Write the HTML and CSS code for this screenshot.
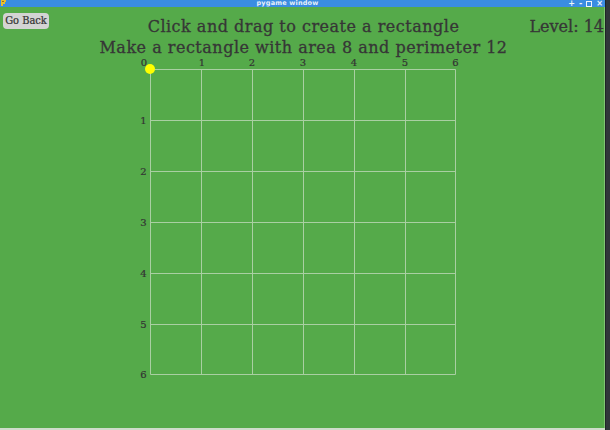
FILE: index.html
```html
<!DOCTYPE html>
<html>
<head>
<meta charset="utf-8">
<title>pygame window</title>
<link rel="stylesheet" href="styles.css">
</head>
<body>
<div class="screen">
  <div class="window">
    <div class="titlebar">
      <svg class="app-icon" width="8" height="7" viewBox="0 0 8 7">
        <path d="M1 0 H6 V2 H5 V4 H3 V6 H1 Z" fill="#e8c030"/>
        <rect x="2" y="1" width="2" height="1" fill="#a07010"/>
      </svg>
      <span class="title">pygame window</span>
      <span class="controls"><span>+</span><span>-</span><span class="restore"></span><span>×</span></span>
    </div>
    <div class="main">
      <div class="header">
        <button class="back">Go Back</button>
        <div class="prompt">
          <div>Click and drag to create a rectangle</div>
          <div>Make a rectangle with area 8 and perimeter 12</div>
        </div>
        <div class="level">Level: 14</div>
      </div>
      <svg class="board" width="330" height="330" viewBox="0 0 330 330">
        <g class="lines">
          <line x1="15.5" y1="14.5" x2="15.5" y2="319.5"/>
          <line x1="66.5" y1="14.5" x2="66.5" y2="319.5"/>
          <line x1="117.5" y1="14.5" x2="117.5" y2="319.5"/>
          <line x1="168.5" y1="14.5" x2="168.5" y2="319.5"/>
          <line x1="219.5" y1="14.5" x2="219.5" y2="319.5"/>
          <line x1="270.5" y1="14.5" x2="270.5" y2="319.5"/>
          <line x1="320.5" y1="14.5" x2="320.5" y2="319.5"/>
          <line x1="15.5" y1="14.5" x2="320.5" y2="14.5"/>
          <line x1="15.5" y1="65.5" x2="320.5" y2="65.5"/>
          <line x1="15.5" y1="116.5" x2="320.5" y2="116.5"/>
          <line x1="15.5" y1="167.5" x2="320.5" y2="167.5"/>
          <line x1="15.5" y1="218.5" x2="320.5" y2="218.5"/>
          <line x1="15.5" y1="269.5" x2="320.5" y2="269.5"/>
          <line x1="15.5" y1="319.5" x2="320.5" y2="319.5"/>
        </g>
        <g class="labels">
          <text x="9" y="11">0</text>
          <text x="67" y="11">1</text>
          <text x="117" y="11">2</text>
          <text x="168" y="11">3</text>
          <text x="219" y="11">4</text>
          <text x="270" y="11">5</text>
          <text x="320.5" y="11">6</text>
          <text x="8.5" y="69">1</text>
          <text x="8.5" y="120">2</text>
          <text x="8.5" y="171">3</text>
          <text x="8.5" y="222">4</text>
          <text x="8.5" y="273">5</text>
          <text x="8.5" y="323">6</text>
        </g>
        <circle class="dot" cx="15" cy="14" r="5"/>
      </svg>
    </div>
    <div class="bottom"></div>
  </div>
  <div class="edge"></div>
</div>
</body>
</html>
```
FILE: styles.css
```css
html, body {
  margin: 0;
  padding: 0;
  width: 610px;
  height: 430px;
  overflow: hidden;
  background: #55aa4a;
}
.screen {
  display: flex;
  width: 610px;
  height: 430px;
}
.window {
  width: 605px;
  display: flex;
  flex-direction: column;
}
.edge {
  flex: 1;
  background: #30363a;
  border-left: 1px solid #1e2326;
}
.titlebar {
  height: 7px;
  background: #3a8de2;
  position: relative;
  display: flex;
  align-items: center;
  justify-content: center;
  overflow: hidden;
}
.app-icon {
  position: absolute;
  left: 0;
  top: 0;
}
.title {
  font-family: "DejaVu Sans", sans-serif;
  font-weight: bold;
  font-size: 6.5px;
  line-height: 7px;
  color: #e8f0fa;
  margin-left: -30px;
  letter-spacing: 0.2px;
}
.controls {
  position: absolute;
  right: 2px;
  top: 0;
  display: flex;
  gap: 4px;
  font-family: "DejaVu Sans", sans-serif;
  font-weight: bold;
  font-size: 8px;
  line-height: 7px;
  color: #eef4fb;
}
.restore {
  width: 4px;
  height: 4px;
  margin-top: 1px;
  border: 1px solid #eef4fb;
}
.main {
  flex: 1;
  background: #55aa4a;
  border-right: 1px solid #7fc473;
}
.bottom {
  height: 2px;
  background: #cfdccb;
}
.header {
  height: 48px;
  box-sizing: border-box;
  padding: 6px 0 0 3px;
  display: grid;
  grid-template-columns: 1fr auto 1fr;
  align-items: start;
}
.back {
  justify-self: start;
  width: 46px;
  height: 16px;
  padding: 0;
  margin: 0;
  border: none;
  border-radius: 4px;
  background: #d4d4d4;
  color: #333333;
  font-family: "DejaVu Serif Condensed", "DejaVu Serif", serif;
  font-size: 11px;
  line-height: 16px;
  -webkit-text-stroke: 0.2px #333333;
}
.prompt {
  margin-top: 3px;
  font-family: "DejaVu Serif", serif;
  font-size: 16px;
  letter-spacing: 0.5px;
  line-height: 21px;
  color: #363636;
  text-align: center;
  -webkit-text-stroke: 0.3px #363636;
}
.level {
  justify-self: end;
  margin-top: 3px;
  font-family: "DejaVu Serif", serif;
  font-size: 16px;
  line-height: 21px;
  color: #363636;
  -webkit-text-stroke: 0.3px #363636;
}
.board {
  display: block;
  margin-left: 135px;
}
.lines line {
  stroke: #a9cfa2;
  stroke-width: 1;
}
.labels text {
  font-family: "DejaVu Serif", serif;
  font-size: 10px;
  fill: #333333;
  stroke: #333333;
  stroke-width: 0.2px;
  text-anchor: middle;
}
.dot {
  fill: #ffff00;
}
```
